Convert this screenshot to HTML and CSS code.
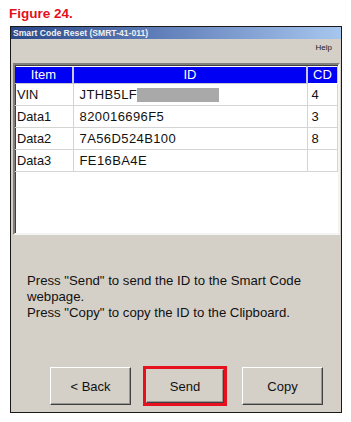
FILE: index.html
```html
<!DOCTYPE html>
<html>
<head>
<meta charset="utf-8">
<link rel="stylesheet" href="styles.css">
</head>
<body>
<div class="caption">Figure 24.</div>
<div class="window">
  <div class="titlebar">Smart Code Reset (SMRT-41-011)</div>
  <div class="menubar"><span class="menu-help">Help</span></div>
  <div class="frame">
    <table class="grid">
      <thead>
        <tr><th class="c-item">Item</th><th class="c-id">ID</th><th class="c-cd">CD</th></tr>
      </thead>
      <tbody>
        <tr><td class="item">VIN</td><td class="id">JTHB5LF<span class="redact"></span></td><td class="cd">4</td></tr>
        <tr><td class="item">Data1</td><td class="id">820016696F5</td><td class="cd">3</td></tr>
        <tr><td class="item">Data2</td><td class="id">7A56D524B100</td><td class="cd">8</td></tr>
        <tr><td class="item">Data3</td><td class="id">FE16BA4E</td><td class="cd"></td></tr>
      </tbody>
    </table>
  </div>
  <div class="message">
    <p>Press "Send" to send the ID to the Smart Code webpage.</p>
    <p>Press "Copy" to copy the ID to the Clipboard.</p>
  </div>
  <div class="buttons">
    <button class="btn">&lt; Back</button>
    <span class="highlight"><button class="btn btn-inner">Send</button></span>
    <button class="btn btn-copy">Copy</button>
  </div>
</div>
</body>
</html>
```

FILE: styles.css
```css
html, body {
  margin: 0;
  padding: 0;
  background: #ffffff;
}

body {
  font-family: "Liberation Sans", Arial, sans-serif;
}

.caption {
  padding: 6px 0 0 9px;
  height: 16px;
  line-height: 16px;
  font-size: 13.5px;
  font-weight: bold;
  color: #e3101c;
  margin-bottom: 4px;
}

.window {
  margin-left: 10px;
  width: 330px;
  height: 385px;
  border: 1px solid #1a1a1a;
  background: #d4d0c8;
  display: flex;
  flex-direction: column;
}

.titlebar {
  height: 12px;
  line-height: 12px;
  padding-left: 2px;
  font-size: 8.6px;
  font-weight: bold;
  color: #f0f0f0;
  background: linear-gradient(to right, #2a4888 0%, #5a78b4 40%, #a7c6ee 100%);
  white-space: nowrap;
}

.menubar {
  height: 24px;
  display: flex;
  justify-content: flex-end;
  align-items: flex-start;
  padding-right: 9px;
}

.menu-help {
  margin-top: 4px;
  font-size: 8px;
  line-height: 10px;
  color: #222;
}

.frame {
  margin-left: 2px;
  width: 323px;
  height: 167px;
  border-style: solid;
  border-width: 2px 2px 2px 2px;
  border-color: #808080 #f4f4f4 #f4f4f4 #808080;
  box-shadow: inset 1px 1px 0 #404040;
  background: #ffffff;
  padding: 1px 0 0 0;
}

.grid {
  width: 322px;
  border-collapse: collapse;
  table-layout: fixed;
}

.grid th {
  height: 16px;
  padding: 0;
  background: #0000f4;
  color: #ffffff;
  font-weight: normal;
  font-size: 13px;
  line-height: 14px;
  text-align: center;
  border-right: 2px solid #c8c8d8;
  border-bottom: 1px solid #c8c8d8;
}

.grid th.c-cd {
  border: 1px solid #ffffff;
  border-right: 1px solid #c8c8d8;
}

.c-item { width: 57px; }
.c-id { width: 232px; }
.c-cd { width: 29px; }

.grid td {
  height: 21px;
  padding: 0 0 0 2px;
  border-bottom: 1px solid #d4d4d4;
  border-right: 1px solid #d4d4d4;
  color: #111;
  font-size: 12.8px;
  line-height: 14px;
  vertical-align: middle;
  white-space: nowrap;
}

.grid td.id {
  padding-left: 6px;
  font-size: 13px;
  letter-spacing: 0.4px;
}

.grid td.cd {
  padding-left: 4px;
  font-size: 13px;
}

.redact {
  display: inline-block;
  width: 82px;
  height: 14px;
  vertical-align: -3px;
  background: #a9a9a9;
}

.message {
  margin-top: 38px;
  padding-left: 16px;
  width: 300px;
  font-size: 13.2px;
  line-height: 16px;
  color: #111;
}

.message p {
  margin: 0;
}

.buttons {
  margin-top: 45px;
  display: flex;
  align-items: center;
  padding-left: 39px;
  height: 40px;
}

.btn {
  width: 81px;
  height: 38px;
  padding: 0;
  background: #d4d0c8;
  border: 1px solid;
  border-color: #ffffff #404040 #404040 #ffffff;
  box-shadow: inset -1px -1px 0 #9a9690;
  font-family: "Liberation Sans", Arial, sans-serif;
  font-size: 13px;
  color: #111;
}

.highlight {
  margin-left: 12px;
  width: 78px;
  height: 34px;
  border: 3px solid #e8101f;
  display: flex;
}

.btn-inner {
  width: 78px;
  height: 34px;
  border-color: #d4d0c8 #404040 #404040 #d4d0c8;
}

.btn-copy {
  margin-left: 15px;
}
```
